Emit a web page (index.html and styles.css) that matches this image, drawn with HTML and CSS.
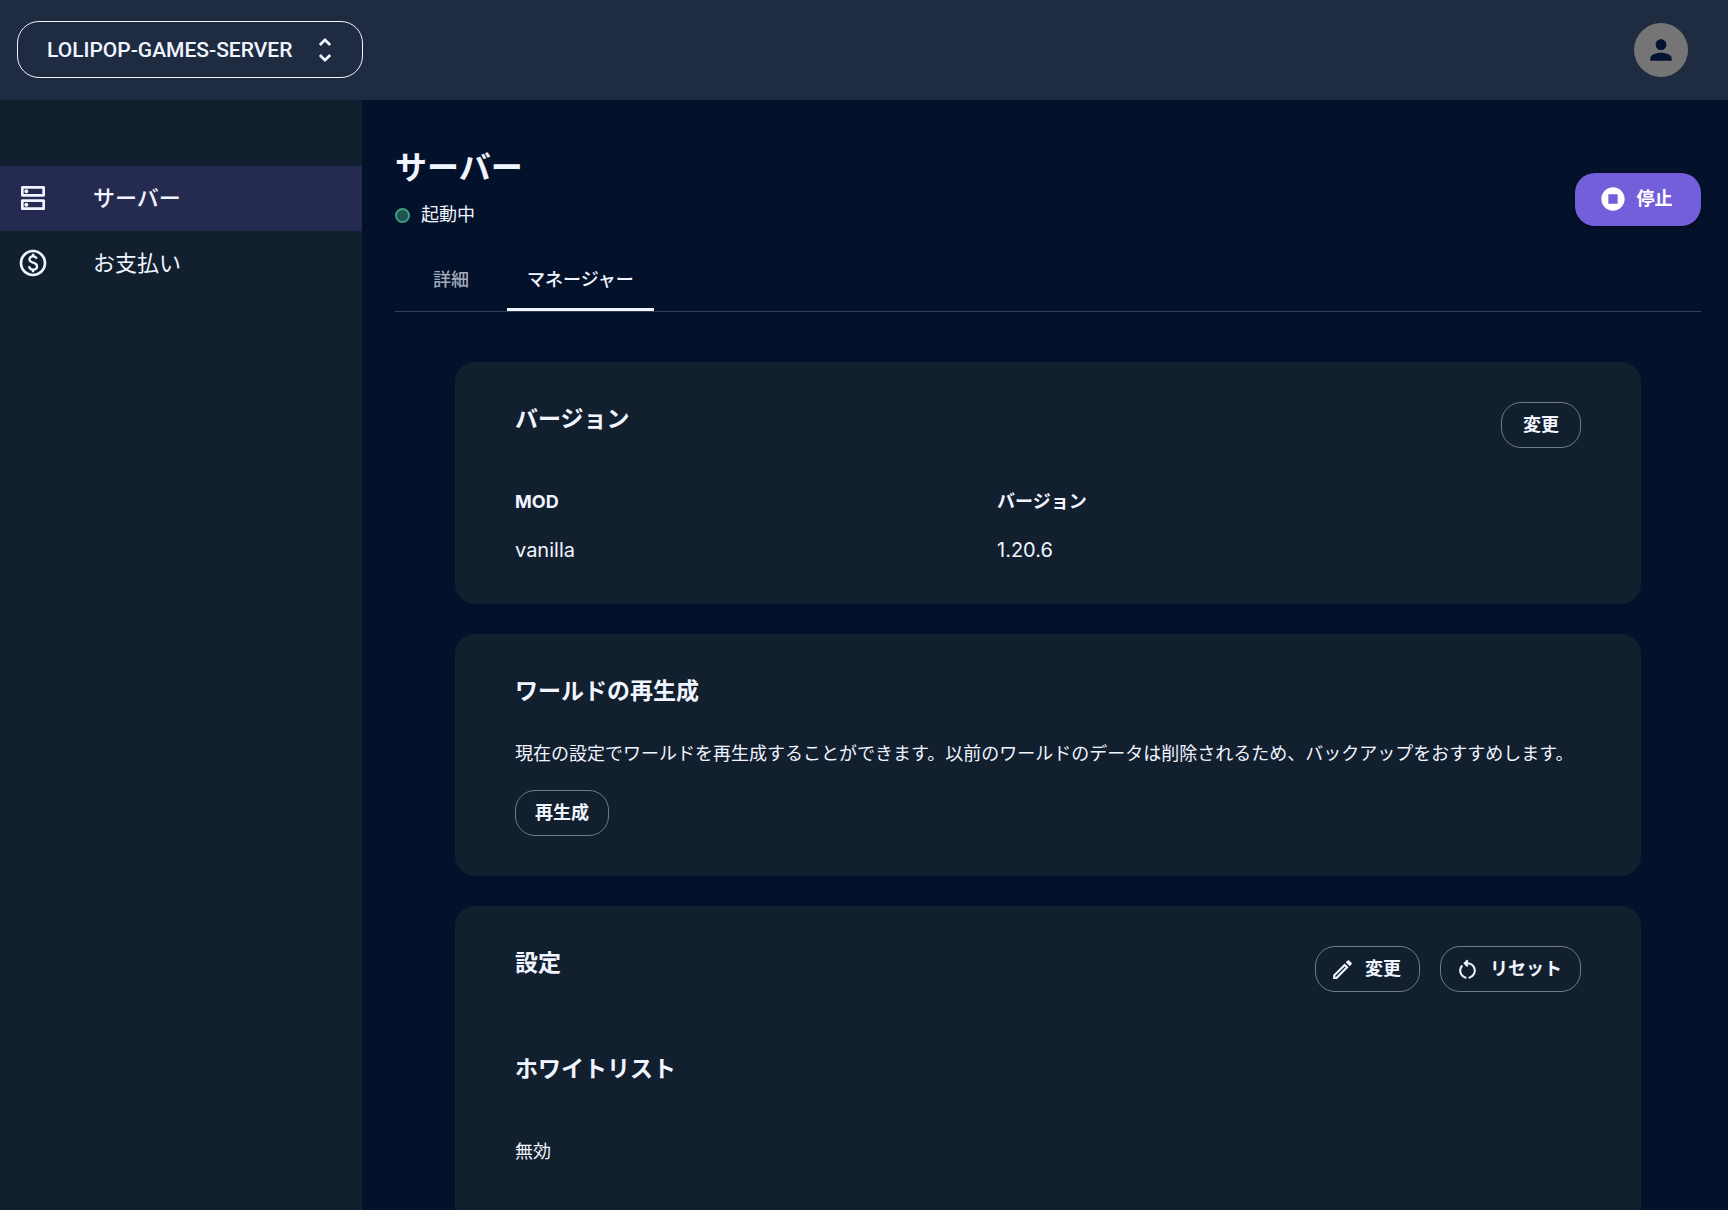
FILE: index.html
```html
<!DOCTYPE html>
<html lang="ja">
<head>
<meta charset="utf-8">
<meta name="viewport" content="width=device-width, initial-scale=1">
<title>サーバー | マネージャー</title>
<link rel="stylesheet" href="styles.css">
</head>
<body>
<header class="topbar">
  <button class="server-switch" type="button">
    <span>LOLIPOP-GAMES-SERVER</span>
    <svg class="icon icon-lg" viewBox="0 0 24 24" aria-hidden="true"><path d="M12 5.83 15.17 9l1.41-1.41L12 3 7.41 7.59 8.83 9 12 5.83zm0 12.34L8.83 15l-1.41 1.41L12 21l4.59-4.59L15.17 15 12 18.17z"/></svg>
  </button>
  <button class="avatar" type="button" aria-label="アカウント">
    <svg class="icon icon-lg" viewBox="0 0 24 24" aria-hidden="true"><path d="M12 12c2.21 0 4-1.79 4-4s-1.79-4-4-4-4 1.79-4 4 1.79 4 4 4zm0 2c-2.67 0-8 1.34-8 4v2h16v-2c0-2.66-5.33-4-8-4z"/></svg>
  </button>
</header>
<div class="layout">
  <nav class="sidebar">
    <a class="nav-item is-active" href="#server">
      <svg class="icon icon-lg" viewBox="0 0 24 24" aria-hidden="true"><path d="M19 15v4H5v-4h14m1-2H4c-.55 0-1 .45-1 1v6c0 .55.45 1 1 1h16c.55 0 1-.45 1-1v-6c0-.55-.45-1-1-1zM7 18.5c-.82 0-1.5-.67-1.5-1.5s.68-1.5 1.5-1.5 1.5.67 1.5 1.5-.67 1.5-1.5 1.5zM19 5v4H5V5h14m1-2H4c-.55 0-1 .45-1 1v6c0 .55.45 1 1 1h16c.55 0 1-.45 1-1V4c0-.55-.45-1-1-1zM7 8.5c-.82 0-1.5-.67-1.5-1.5S6.18 5.5 7 5.5s1.5.68 1.5 1.5S7.83 8.5 7 8.5z"/></svg>
      <span>サーバー</span>
    </a>
    <a class="nav-item" href="#billing">
      <svg class="icon icon-lg" viewBox="0 0 24 24" aria-hidden="true"><path d="M12 2C6.48 2 2 6.48 2 12s4.48 10 10 10 10-4.48 10-10S17.52 2 12 2zm0 18c-4.41 0-8-3.59-8-8s3.59-8 8-8 8 3.59 8 8-3.59 8-8 8zm.89-8.9c-1.78-.59-2.64-.96-2.64-1.9 0-1.02 1.11-1.39 1.81-1.39 1.31 0 1.79.99 1.9 1.34l1.58-.67c-.15-.44-.82-1.91-2.66-2.23V5h-1.75v1.26c-2.6.56-2.62 2.85-2.62 2.96 0 2.27 2.25 2.91 3.35 3.31 1.58.56 2.28 1.07 2.28 2.03 0 1.13-1.05 1.61-1.98 1.61-1.82 0-2.34-1.87-2.4-2.09l-1.66.67c.63 2.19 2.28 2.78 3.02 2.96V19h1.75v-1.24c.52-.09 3.02-.59 3.02-3.22.01-1.39-.6-2.61-3-3.44z"/></svg>
      <span>お支払い</span>
    </a>
  </nav>
  <main class="main">
    <div class="page-head">
      <div>
        <h1 class="page-title">サーバー</h1>
        <p class="status"><span class="status-dot"></span>起動中</p>
      </div>
      <button class="btn-primary" type="button">
        <svg class="icon icon-md" viewBox="0 0 24 24" aria-hidden="true"><path d="M12 2C6.48 2 2 6.48 2 12s4.48 10 10 10 10-4.48 10-10S17.52 2 12 2zm4 14H8V8h8v8z"/></svg>
        <span>停止</span>
      </button>
    </div>
    <div class="tabs" role="tablist">
      <button class="tab" type="button" role="tab" aria-selected="false">詳細</button>
      <button class="tab is-active" type="button" role="tab" aria-selected="true">マネージャー</button>
    </div>
    <div class="cards">
      <section class="card">
        <div class="card-head">
          <h2 class="card-title">バージョン</h2>
          <button class="btn" type="button">変更</button>
        </div>
        <dl class="facts">
          <div class="fact"><dt>MOD</dt><dd>vanilla</dd></div>
          <div class="fact"><dt>バージョン</dt><dd>1.20.6</dd></div>
        </dl>
      </section>
      <section class="card">
        <h2 class="card-title">ワールドの再生成</h2>
        <p class="card-text">現在の設定でワールドを再生成することができます。以前のワールドのデータは削除されるため、バックアップをおすすめします。</p>
        <button class="btn" type="button">再生成</button>
      </section>
      <section class="card">
        <div class="card-head">
          <h2 class="card-title">設定</h2>
          <div class="actions">
            <button class="btn btn-icon" type="button">
              <svg class="icon icon-sm" viewBox="0 0 24 24" aria-hidden="true"><path d="m14.06 9.02.92.92L5.92 19H5v-.92l9.06-9.06M17.66 3c-.25 0-.51.1-.7.29l-1.83 1.83 3.75 3.75 1.83-1.83c.39-.39.39-1.02 0-1.41l-2.34-2.34c-.2-.2-.45-.29-.71-.29zm-3.6 3.19L3 17.25V21h3.75L17.81 9.94l-3.75-3.75z"/></svg>
              <span>変更</span>
            </button>
            <button class="btn btn-icon" type="button">
              <svg class="icon icon-sm" viewBox="0 0 24 24" aria-hidden="true"><path d="M6 13c0-1.65.67-3.15 1.76-4.24L6.34 7.34C4.9 8.79 4 10.79 4 13c0 4.08 3.05 7.44 7 7.93v-2.02c-2.83-.48-5-2.94-5-5.91zm14 0c0-4.42-3.58-8-8-8-.06 0-.12.01-.18.01l1.09-1.09L11.5 2.5 8 6l3.5 3.5 1.41-1.41-1.08-1.08c.06 0 .12-.01.17-.01 3.31 0 6 2.69 6 6 0 2.97-2.17 5.43-5 5.91v2.02c3.95-.49 7-3.85 7-7.93z"/></svg>
              <span>リセット</span>
            </button>
          </div>
        </div>
        <div class="setting">
          <h3 class="card-title">ホワイトリスト</h3>
          <p class="setting-value">無効</p>
        </div>
      </section>
    </div>
  </main>
</div>
</body>
</html>
```
FILE: styles.css
```css
* {
  box-sizing: border-box;
}

body {
  margin: 0;
  min-height: 100vh;
  display: flex;
  flex-direction: column;
  background: #03112b;
  color: #f1f5ff;
  font-family: Inter, "Noto Sans CJK JP", sans-serif;
  font-size: 18px;
  line-height: 28px;
}

h1, h2, h3, p, dl, dd {
  margin: 0;
}

button {
  font: inherit;
  color: inherit;
  cursor: pointer;
}

.icon {
  flex: none;
  fill: currentColor;
}

.icon-sm {
  width: 25px;
  height: 25px;
}

.icon-md {
  width: 28px;
  height: 28px;
}

.icon-lg {
  width: 32px;
  height: 32px;
}

.topbar {
  display: flex;
  align-items: center;
  justify-content: space-between;
  height: 100px;
  padding: 0 40px 1px 17px;
  background: #1f2b41;
}

.server-switch {
  display: flex;
  align-items: center;
  justify-content: space-between;
  width: 346px;
  height: 57px;
  padding: 0 21px 0 29px;
  border: 1px solid #f1f5ff;
  border-radius: 22px;
  background: none;
  font-family: Roboto, sans-serif;
  font-size: 21px;
  font-weight: 500;
}

.avatar {
  display: grid;
  place-items: center;
  width: 54px;
  height: 54px;
  padding: 0;
  border: 0;
  border-radius: 50%;
  background: #757575;
  color: #031330;
}

.layout {
  flex: 1;
  display: flex;
}

.sidebar {
  flex: none;
  width: 362px;
  padding-top: 66px;
  background: #121f2f;
}

.nav-item {
  display: flex;
  align-items: center;
  gap: 44px;
  height: 65px;
  padding: 0 17px 2px;
  color: inherit;
  font-size: 22px;
  font-weight: 400;
  text-decoration: none;
}

.nav-item.is-active {
  background: #252b50;
  font-weight: 500;
}

.main {
  flex: 1;
  min-width: 0;
  padding: 45px 27px 0 33px;
}

.page-head {
  display: flex;
  align-items: center;
  justify-content: space-between;
}

.page-title {
  font-size: 32px;
  font-weight: 700;
  line-height: 46px;
}

.status {
  display: flex;
  align-items: center;
  gap: 11px;
  margin-top: 10px;
}

.status-dot {
  width: 15px;
  height: 15px;
  border: 2px solid #3f9f80;
  border-radius: 50%;
  background: #1f5350;
}

.btn-primary {
  display: flex;
  align-items: center;
  justify-content: center;
  gap: 10px;
  width: 126px;
  height: 53px;
  margin-top: 24px;
  padding: 0 5px 0 0;
  border: 0;
  border-radius: 20px;
  background: #745fdb;
  box-shadow: 0 1px 3px rgba(0, 0, 0, 0.5);
  color: #ffffff;
  font-weight: 700;
}

.tabs {
  display: flex;
  margin-top: 22px;
  border-bottom: 1px solid #343f55;
}

.tab {
  min-width: 112px;
  height: 60px;
  padding: 0 20px;
  border: 0;
  border-bottom: 3px solid transparent;
  background: none;
  color: #a3abbb;
  font-weight: 500;
}

.tab.is-active {
  border-bottom-color: #f1f5ff;
  color: #f1f5ff;
}

.cards {
  display: grid;
  gap: 30px;
  padding: 50px 60px;
}

.card {
  padding: 40px 60px;
  border-radius: 20px;
  background: #121f2f;
}

.card-head {
  display: flex;
  align-items: flex-start;
  justify-content: space-between;
}

.card-title {
  font-size: 23px;
  font-weight: 700;
  line-height: 34px;
}

.card-text {
  margin: 32px 0 22px;
}

.facts {
  display: grid;
  grid-template-columns: 482px 1fr;
  margin-top: 40px;
}

.fact {
  display: grid;
  gap: 20px;
}

.fact dt {
  font-weight: 700;
}

.fact dd {
  font-size: 20px;
}

.actions {
  display: flex;
  gap: 20px;
}

.btn {
  min-width: 80px;
  height: 46px;
  padding: 0 19px;
  border: 1px solid #6f7a8b;
  border-radius: 20px;
  background: none;
  font-weight: 700;
}

.btn-icon {
  display: flex;
  align-items: center;
  gap: 10px;
  padding: 0 18px 0 14px;
}

.setting {
  padding: 60px 0;
}

.setting-value {
  margin-top: 52px;
}
```
